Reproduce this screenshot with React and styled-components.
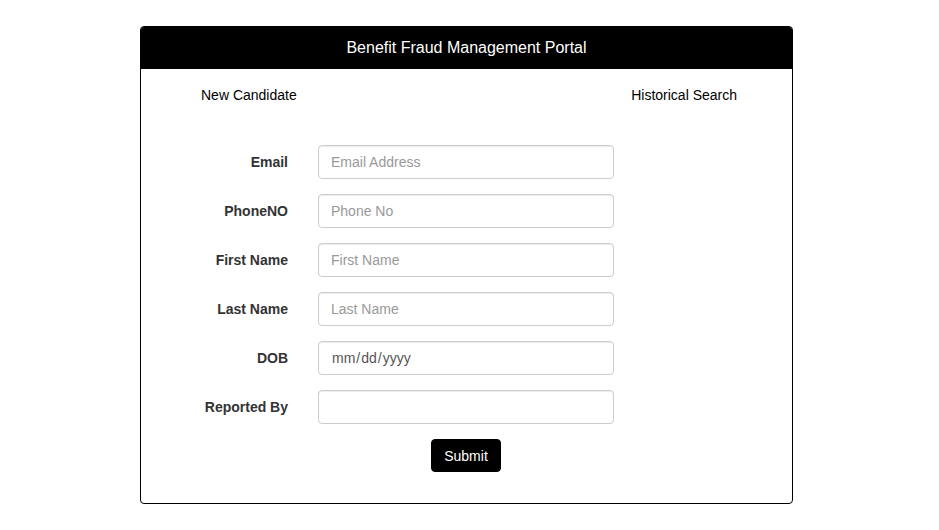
import React from 'react';
import styled, { createGlobalStyle } from 'styled-components';

const GlobalStyle = createGlobalStyle`
	body {
		margin: 0;
		background: #fff;
		font-family: 'Liberation Sans', Arial, sans-serif;
		font-size: 14px;
		line-height: 1.42857;
		color: #333;
	}
	* {
		box-sizing: border-box;
	}
`;

const fields = [
	{ label: 'Email', type: 'email', placeholder: 'Email Address' },
	{ label: 'PhoneNO', type: 'text', placeholder: 'Phone No' },
	{ label: 'First Name', type: 'text', placeholder: 'First Name' },
	{ label: 'Last Name', type: 'text', placeholder: 'Last Name' },
	{ label: 'DOB', type: 'date', placeholder: '' },
	{ label: 'Reported By', type: 'text', placeholder: '' },
];

const App = () => {
	return (
		<>
			<GlobalStyle />
			<StyledCard>
				<StyledHeader>Benefit Fraud Management Portal</StyledHeader>
				<StyledNav>
					<StyledNavLink>New Candidate</StyledNavLink>
					<StyledNavLink>Historical Search</StyledNavLink>
				</StyledNav>
				<StyledForm onSubmit={(e) => e.preventDefault()}>
					{fields.map((f) => (
						<StyledRow key={f.label}>
							<StyledLabel>{f.label}</StyledLabel>
							<StyledInput type={f.type} placeholder={f.placeholder} />
						</StyledRow>
					))}
					<StyledRow>
						<span />
						<StyledActions>
							<StyledSubmit type="submit">Submit</StyledSubmit>
						</StyledActions>
					</StyledRow>
				</StyledForm>
			</StyledCard>
		</>
	);
};

const StyledCard = styled.div`
	width: 653px;
	margin: 26px 0 0 140px;
	border: 1px solid #000;
	border-radius: 4px;
	overflow: hidden;
	background: #fff;
`;

const StyledHeader = styled.div`
	height: 42px;
	background: #000;
	color: #fff;
	font-size: 16px;
	display: flex;
	align-items: center;
	justify-content: center;
`;

const StyledNav = styled.div`
	display: flex;
	justify-content: space-between;
	padding: 16px 55px 0 60px;
	height: 76px;
`;

const StyledNavLink = styled.span`
	color: #000;
	font-size: 14px;
	line-height: 20px;
	cursor: pointer;
`;

const StyledForm = styled.form`
	display: flex;
	flex-direction: column;
	gap: 15px;
	padding-bottom: 31px;
`;

const StyledRow = styled.div`
	display: grid;
	grid-template-columns: 147px 296px;
	column-gap: 30px;
	align-items: center;
`;

const StyledLabel = styled.label`
	text-align: right;
	font-weight: bold;
	color: #333;
	font-size: 14px;
	padding-top: 2px;
`;

const StyledInput = styled.input`
	height: 34px;
	width: 296px;
	padding: 6px 12px;
	font-family: inherit;
	font-size: 14px;
	color: #555;
	border: 1px solid #ccc;
	border-radius: 4px;
	outline: none;
	box-shadow: inset 0 1px 1px rgba(0, 0, 0, 0.075);
	&::placeholder {
		color: #999;
	}
	&::-webkit-calendar-picker-indicator {
		display: none;
	}
`;

const StyledActions = styled.div`
	display: flex;
	justify-content: center;
`;

const StyledSubmit = styled.button`
	background: #000;
	color: #fff;
	border: 1px solid #000;
	border-radius: 4px;
	padding: 6px 12px;
	height: 33px;
	font-family: inherit;
	font-size: 14px;
	cursor: pointer;
`;

export default App;
